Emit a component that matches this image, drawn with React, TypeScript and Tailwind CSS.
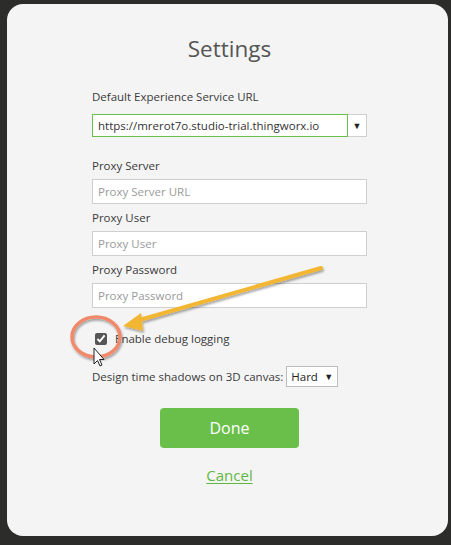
import React from 'react';

const font = { fontFamily: '"Open Sans", "Noto Sans", sans-serif' };

function Field({ label, placeholder }: { label: string; placeholder: string }) {
  return (
    <div className="flex flex-col">
      <label className="h-[26px] leading-[26px] text-[11.5px] text-[#3a3a3a]">{label}</label>
      <input
        className="h-[25px] w-[275px] border border-[#cfcfcf] bg-white px-[5px] text-[11.5px] text-[#333] outline-none placeholder:text-[#9a9a9a]"
        placeholder={placeholder}
      />
    </div>
  );
}

function Annotations() {
  return (
    <svg className="pointer-events-none absolute left-0 top-0" width="451" height="545" viewBox="0 0 451 545">
      <defs>
        <filter id="sh" x="-20%" y="-20%" width="140%" height="140%">
          <feDropShadow dx="1" dy="2" stdDeviation="1.2" floodColor="#000" floodOpacity="0.35" />
        </filter>
      </defs>
      <ellipse cx="96" cy="337" rx="24" ry="20" fill="none" stroke="#f08a6a" strokeWidth="3.5" filter="url(#sh)" />
      <g filter="url(#sh)">
        <line x1="321" y1="268" x2="136" y2="321" stroke="#f2b632" strokeWidth="4" strokeLinecap="round" />
        <polygon points="123,326 141,313 143,331" fill="#f2b632" />
      </g>
      <path
        d="M94 348 L94 364 L97.5 360.5 L100 366 L102 365 L99.5 359.5 L104 359.5 Z"
        fill="#fff"
        stroke="#222"
        strokeWidth="1"
        strokeLinejoin="round"
      />
    </svg>
  );
}

export default function App() {
  return (
    <div className="relative h-[545px] w-[451px] overflow-hidden bg-[#2c2c2b] pl-[7px] pr-[3px] pt-[4px]" style={font}>
      <div className="flex h-[532px] flex-col items-center rounded-[16px] bg-[#f4f4f4] pl-[4px] pt-[30px]">
        <h1 className="text-[22.5px] leading-[30px] text-[#555]">Settings</h1>
        <div className="mt-[20px] flex w-[275px] flex-col">
          <label className="h-[26px] leading-[26px] text-[11.5px] text-[#3a3a3a]">Default Experience Service URL</label>
          <div className="mt-[4px] flex h-[23px]">
            <div className="flex flex-1 items-center border border-[#6abf4b] bg-white px-[5px] text-[11.5px] text-[#333]">
              https://mrerot7o.studio-trial.thingworx.io
            </div>
            <div className="flex w-[19px] items-center justify-center border border-l-0 border-[#cfcfcf] bg-white text-[9px] text-[#222]">
              ▼
            </div>
          </div>
          <div className="mt-[16px] flex flex-col gap-[1px]">
            <Field label="Proxy Server" placeholder="Proxy Server URL" />
            <Field label="Proxy User" placeholder="Proxy User" />
            <Field label="Proxy Password" placeholder="Proxy Password" />
          </div>
          <label className="mt-[22px] flex items-center gap-[8px] text-[11.5px] text-[#3a3a3a]">
            <input type="checkbox" defaultChecked className="ml-[3px] h-[12px] w-[12px] accent-[#555]" />
            Enable debug logging
          </label>
          <div className="mt-[19px] flex items-center gap-[3px] text-[11.5px] text-[#3a3a3a]">
            <span>Design time shadows on 3D canvas:</span>
            <div className="flex h-[21px] w-[52px] items-center justify-between border border-[#bdbdbd] bg-white px-[4px] text-[11.5px] text-[#222]">
              <span>Hard</span>
              <span className="text-[9px]">▼</span>
            </div>
          </div>
        </div>
        <button className="mt-[21px] h-[40px] w-[139px] rounded-[4px] bg-[#6abf4b] text-[16px] text-white">Done</button>
        <a href="#" className="mt-[16px] text-[15px] text-[#5fb843] underline underline-offset-2">
          Cancel
        </a>
      </div>
      <Annotations />
    </div>
  );
}
